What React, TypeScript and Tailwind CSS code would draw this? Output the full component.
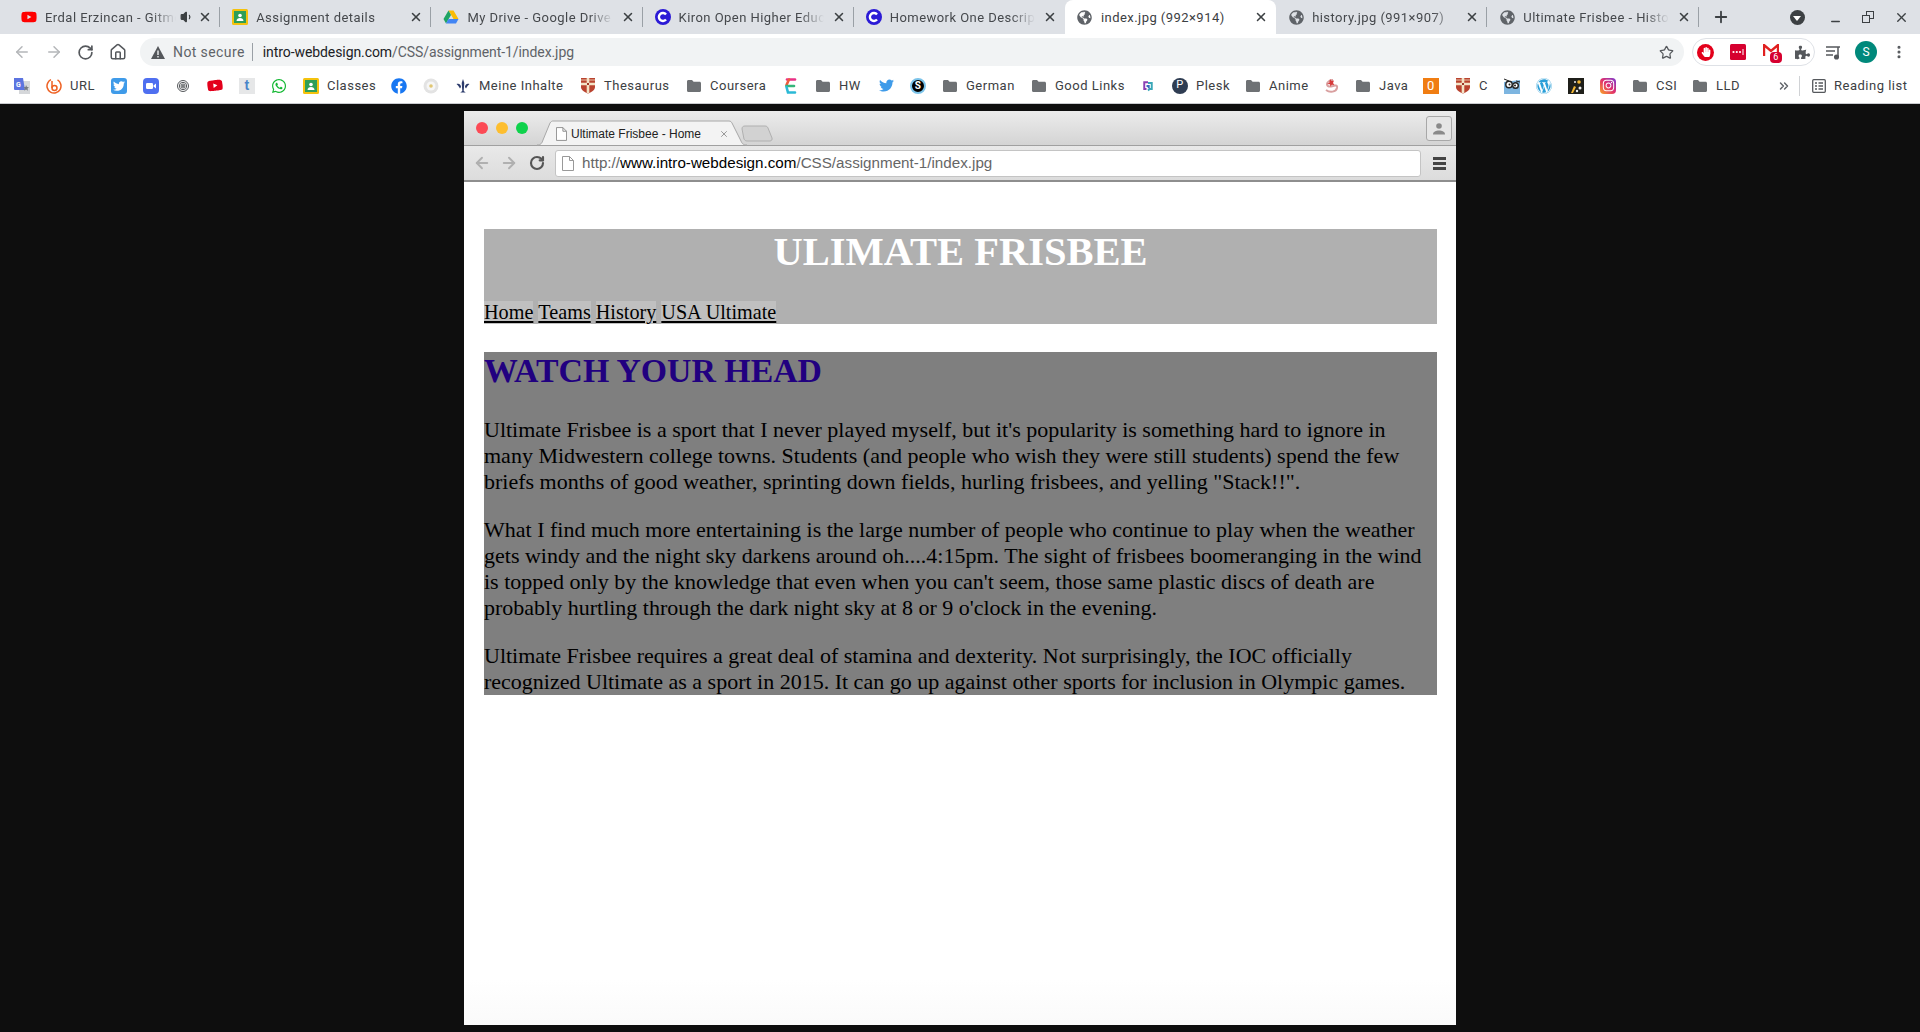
import type { ReactNode } from 'react'
import { ArrowLeft, ArrowRight, Home, RotateCw, Star, X, Plus, Minus, MoreVertical, ChevronsRight, Volume1 } from 'lucide-react'
import { FaFacebook, FaGlobeAmericas, FaHandPaper, FaInstagram, FaPuzzlePiece, FaTwitter, FaWhatsapp, FaWordpress, FaYoutube } from 'react-icons/fa'

const Folder = () => (
  <svg width="16" height="16" viewBox="0 0 16 16" className="text-[#6e7174]">
    <path d="M1 3.5C1 2.7 1.6 2 2.4 2H6l1.6 1.8h6c.8 0 1.4.7 1.4 1.5v7.2c0 .8-.6 1.5-1.4 1.5H2.4C1.6 14 1 13.300 1 12.500z" fill="currentColor" />
  </svg>
)

const Classroom = () => (
  <svg width="16" height="16" viewBox="0 0 16 16">
    <rect width="16" height="16" rx="1.500" fill="#f4c20d" />
    <rect x="2" y="2" width="12" height="12" fill="#2f9e58" />
    <circle cx="8" cy="6.500" r="1.800" fill="#fff" />
    <path d="M4.500 12c0-2 1.600-3 3.500-3s3.500 1 3.500 3z" fill="#fff" />
  </svg>
)

const Drive = () => (
  <svg width="16" height="16" viewBox="0 0 16 16">
    <path d="M5.500 1.500h5L15.500 10h-5z" fill="#fbbc04" />
    <path d="M5.500 1.500L.5 10 3 14.500 8 6z" fill="#1fa463" />
    <path d="M3 14.500h10l2.500-4.500h-10z" fill="#4285f4" />
  </svg>
)

const Kiron = () => (
  <svg width="16" height="16" viewBox="0 0 16 16">
    <circle cx="8" cy="8" r="8" fill="#2b1ad6" />
    <path d="M11 5.500A4 4 0 1 0 11 10.500" fill="none" stroke="#fff" strokeWidth="2.400" />
  </svg>
)

const Translate = () => (
  <svg width="16" height="16" viewBox="0 0 16 16">
    <rect x="5" y="3" width="11" height="13" fill="#d5d7da" />
    <path d="M0 0h9l2 12H5l-1 0H1a1 1 0 0 1-1-1z" fill="#5c74e0" />
    <path d="M12 7l1 2 2 .2-1.500 1.400.5 2.100-2-1.100-1.700 1.100.4-2.100L9.500 9.200l2-.2z" fill="#757a80" />
    <text x="2" y="8.500" fontSize="7" fontWeight="700" fill="#fff" fontFamily="Roboto, sans-serif">G</text>
  </svg>
)

const Bitly = () => (
  <svg width="16" height="16" viewBox="0 0 16 16" fill="none" stroke="#ee6123" strokeWidth="1.500">
    <circle cx="8" cy="8" r="7" strokeDasharray="37 7" transform="rotate(-60 8 8)" />
    <circle cx="8.500" cy="10" r="2.500" />
    <path d="M6 3v7" />
  </svg>
)

const Bird = () => (
  <span className="flex h-4 w-4 items-center justify-center rounded-[3px] bg-[#3f9be9] text-white">
    <FaTwitter size={12} />
  </span>
)

const Zoom = () => (
  <svg width="16" height="16" viewBox="0 0 16 16">
    <rect width="16" height="16" rx="4" fill="#4f6ff0" />
    <rect x="3" y="5" width="7" height="6" rx="1.200" fill="#fff" />
    <path d="M10.500 7.500L13 5.500v5l-2.500-2z" fill="#fff" />
  </svg>
)

const Fingerprint = () => (
  <svg width="16" height="16" viewBox="0 0 16 16" fill="none" stroke="#55585b" strokeWidth="1">
    <circle cx="8" cy="8" r="5.500" />
    <circle cx="8" cy="8" r="3.700" />
    <circle cx="8" cy="8" r="2" />
    <circle cx="8" cy="8" r=".6" fill="#55585b" />
  </svg>
)

const Tumblr = () => (
  <span className="flex h-4 w-4 items-center justify-center bg-[#e6e7e8] text-[14px] font-bold text-[#4a85c9] [font-family:'Liberation_Sans',sans-serif]">t</span>
)

const Flower = () => (
  <svg width="16" height="16" viewBox="0 0 16 16">
    <circle cx="8" cy="8" r="7.500" fill="#e3e3e3" />
    <circle cx="8" cy="8" r="4.500" fill="#f6f6f6" />
    <circle cx="8" cy="8" r="1.800" fill="#e0c673" />
  </svg>
)

const Fleur = () => (
  <svg width="16" height="16" viewBox="0 0 16 16" fill="#2b3a6b">
    <path d="M8 1l1.300 4-.6 8 2 1.500H5.300l2-1.500-.6-8z" />
    <path d="M1.500 6c2.500-1 4.500.5 4.500 3L5 10.500C4 8.500 3 7.500 1.500 6zM14.500 6c-2.500-1-4.500.5-4.500 3l1 1.500c1-2 2-3 3.500-4.500z" />
  </svg>
)

const Crest = () => (
  <svg width="16" height="17" viewBox="0 0 16 17">
    <path d="M1 1h14v9c0 3-3 5-7 6.500C4 15 1 13 1 10z" fill="#b9432f" />
    <path d="M1 7h14M8 1v15" stroke="#f3e3c6" strokeWidth="2.600" />
    <rect x="7" y="6" width="2" height="2" fill="#9c3526" />
    <path d="M1 3h14" stroke="#f3e3c6" strokeWidth=".8" />
  </svg>
)

const Eicon = () => (
  <svg width="16" height="18" viewBox="0 0 16 18" fill="none" strokeWidth="2.600" strokeLinecap="round">
    <path d="M4 2.500h8" stroke="#ea2f86" />
    <path d="M6 2.500L3.500 8" stroke="#ef5a3c" />
    <path d="M3.500 9h7.500" stroke="#35b57a" />
    <path d="M3.500 10l1.500 5.500h7" stroke="#2bb9d6" />
  </svg>
)

const Skooli = () => (
  <span className="flex h-4 w-4 items-center justify-center rounded-full border-2 border-[#7cc4ea] bg-black text-[10px] font-bold text-white">S</span>
)

const Fg = () => (
  <svg width="12" height="12" viewBox="0 0 16 16" fill="none" strokeWidth="2.600">
    <path d="M8 3H3v9h3" stroke="#8a3fb3" />
    <path d="M8 4h5v8h-3l-2 2" stroke="#3aa7b8" />
    <path d="M6 8h3v3" stroke="#3a6cc0" />
  </svg>
)

const Plesk = () => (
  <span className="flex h-4 w-4 items-center justify-center rounded-full bg-[#2f3d52] text-[11px] text-white">P</span>
)

const Anime = () => (
  <svg width="16" height="18" viewBox="0 0 16 18" fill="none">
    <path d="M3 13c4 3 10 2 11-2 .6-3-2-3-4-2-3 1-6 1-6-2 0-2 3-4 6-4" stroke="#d9a0a0" strokeWidth="2" />
    <path d="M7 2l1.500 2 2.500-.5-1 2.500 1.500 2-2.700-.3-1.300 2-.5-2.500L4 7l2.300-1.200z" fill="#d63a3a" />
  </svg>
)

const Zero = () => (
  <span className="flex h-4 w-4 items-center justify-center bg-[#f07d12] text-[13px] leading-none text-white">0</span>
)

const Owl = () => (
  <svg width="16" height="16" viewBox="0 0 16 16">
    <path d="M0 4l16-2v14H0z" fill="#7db5e0" />
    <circle cx="5" cy="6.500" r="3.200" fill="#fff" stroke="#222" strokeWidth="1.400" />
    <circle cx="11.500" cy="7.500" r="2.800" fill="#fff" stroke="#222" strokeWidth="1.400" />
    <circle cx="5.500" cy="6.500" r="1" fill="#222" />
    <circle cx="11" cy="7.500" r="1" fill="#222" />
    <path d="M0 1l5 2M16 4l-4-1" stroke="#222" />
  </svg>
)

const Stars = () => (
  <svg width="16" height="16" viewBox="0 0 16 16">
    <rect width="16" height="16" fill="#1f1f1a" />
    <path d="M3 15l3-7 2 1-3 6z" fill="#f2b632" />
    <circle cx="11" cy="4" r="1.800" fill="#f2b632" />
    <circle cx="12" cy="10" r="1.500" fill="#eee" />
    <circle cx="7" cy="4" r="1" fill="#eee" />
    <circle cx="9" cy="13" r="1.200" fill="#eee" />
  </svg>
)

const Insta = () => (
  <span className="flex h-4 w-4 items-center justify-center rounded-[4px] bg-[linear-gradient(45deg,#f9a825,#e1306c_50%,#7a3bd1)] text-white">
    <FaInstagram size={13} />
  </span>
)

type Mark = { icon: ReactNode; label?: string; w?: number }

const bookmarks: Mark[] = [
  { icon: <Translate /> },
  { icon: <Bitly />, label: 'URL', w: 25 },
  { icon: <Bird /> },
  { icon: <Zoom /> },
  { icon: <Fingerprint /> },
  { icon: <FaYoutube size={17} className="-rotate-6 text-[#e3001b]" /> },
  { icon: <Tumblr /> },
  { icon: <FaWhatsapp size={16} className="text-[#12b832]" /> },
  { icon: <Classroom />, label: 'Classes', w: 48 },
  { icon: <FaFacebook size={16} className="text-[#1877f2]" /> },
  { icon: <Flower /> },
  { icon: <Fleur />, label: 'Meine Inhalte', w: 85 },
  { icon: <Crest />, label: 'Thesaurus', w: 66 },
  { icon: <Folder />, label: 'Coursera', w: 57 },
  { icon: <Eicon /> },
  { icon: <Folder />, label: 'HW', w: 23 },
  { icon: <FaTwitter size={15} className="text-[#3f9be9]" /> },
  { icon: <Skooli /> },
  { icon: <Folder />, label: 'German', w: 49 },
  { icon: <Folder />, label: 'Good Links', w: 69 },
  { icon: <Fg /> },
  { icon: <Plesk />, label: 'Plesk', w: 33 },
  { icon: <Folder />, label: 'Anime', w: 38 },
  { icon: <Anime /> },
  { icon: <Folder />, label: 'Java', w: 28 },
  { icon: <Zero /> },
  { icon: <Crest />, label: 'C', w: 9 },
  { icon: <Owl /> },
  { icon: <FaWordpress size={16} className="text-[#2a9fd8]" /> },
  { icon: <Stars /> },
  { icon: <Insta /> },
  { icon: <Folder />, label: 'CSI', w: 20 },
  { icon: <Folder />, label: 'LLD', w: 24 },
]

const Globe = () => <FaGlobeAmericas size={15} className="text-[#5f6368]" />

const tabs: { icon: ReactNode; title: string; audio?: boolean; active?: boolean; noSep?: boolean }[] = [
  { icon: <FaYoutube size={16} className="text-[#f00]" />, title: 'Erdal Erzincan - Gitmem', audio: true },
  { icon: <Classroom />, title: 'Assignment details' },
  { icon: <Drive />, title: 'My Drive - Google Drive' },
  { icon: <Kiron />, title: 'Kiron Open Higher Education' },
  { icon: <Kiron />, title: 'Homework One Description', noSep: true },
  { icon: <Globe />, title: 'index.jpg (992×914)', active: true, noSep: true },
  { icon: <Globe />, title: 'history.jpg (991×907)' },
  { icon: <Globe />, title: 'Ultimate Frisbee - History' },
]

function Tab({ t }: { t: (typeof tabs)[number] }) {
  return (
    <div className={`relative flex h-[34px] w-[211.2px] shrink-0 items-center pl-3 pr-2 ${t.active ? 'rounded-t-lg bg-white' : ''}`}>
      <span className="flex w-4 shrink-0 justify-center">{t.icon}</span>
      <span className={`ml-2 min-w-0 flex-1 overflow-hidden whitespace-nowrap pt-[1px] text-[13px] tracking-[.45px] ${t.active ? 'text-[#3c4043]' : 'text-[#45484c] [mask-image:linear-gradient(to_left,transparent,black_24px)]'}`}>
        {t.title}
      </span>
      {t.audio && <Volume1 size={14} fill="#3c4043" className="ml-1 shrink-0 text-[#3c4043]" />}
      <X size={14} strokeWidth={2.600} className={`shrink-0 text-[#3c4043] ${t.audio ? 'ml-[4px]' : 'ml-2'}`} />
      {!t.noSep && <span className="absolute right-0 top-[7px] h-5 w-px bg-[#9aa0a6]" />}
    </div>
  )
}

function ChromeBar() {
  return (
    <div className="[font-family:Roboto,'Liberation_Sans',sans-serif]">
      <div className="flex h-[34px] items-center bg-[#dee1e6] pl-[9px]">
        {tabs.map(t => <Tab key={t.title} t={t} />)}
        <Plus size={18} strokeWidth={2.400} className="ml-[13px] text-[#3c4043]" />
        <span className="ml-[60px] flex h-[15px] w-[15px] items-center justify-center rounded-full bg-[#3c4043]">
          <span className="mt-[3px] h-0 w-0 border-x-[4px] border-t-[5px] border-x-transparent border-t-white" />
        </span>
        <Minus size={13} strokeWidth={2.500} className="ml-[24px] mt-2 text-[#3c4043]" />
        <span className="relative ml-[20px] h-3 w-3">
          <span className="absolute right-0 top-0 h-[8px] w-[8px] border-[1.500px] border-[#3c4043]" />
          <span className="absolute bottom-0 left-0 h-[8px] w-[8px] border-[1.500px] border-[#3c4043] bg-[#dee1e6]" />
        </span>
        <X size={15} strokeWidth={2.200} className="ml-[20px] text-[#3c4043]" />
      </div>

      <div className="flex h-[34px] items-center bg-white pl-[13px] pt-[2px]">
        <ArrowLeft size={18} className="text-[#b4b6b9]" />
        <ArrowRight size={18} className="ml-[14px] text-[#b4b6b9]" />
        <RotateCw size={17} strokeWidth={2.400} className="ml-[14px] text-[#55585c]" />
        <Home size={18} strokeWidth={2} className="ml-[15px] text-[#55585c]" />
        <div className="ml-[13px] flex h-[28px] w-[1544px] items-center rounded-full bg-[#f1f3f4] pl-[11px] pr-[10px]">
          <svg width="14" height="13" viewBox="0 0 14 13" className="shrink-0"><path d="M7 0l7 13H0z" fill="#54575b" /><rect x="6.300" y="4.500" width="1.400" height="4.500" fill="#f1f3f4" /><rect x="6.300" y="10" width="1.400" height="1.500" fill="#f1f3f4" /></svg>
          <span className="ml-2 text-[14px] tracking-[.4px] text-[#5f6368]">Not secure</span>
          <span className="ml-[7px] h-[18px] w-px bg-[#9aa0a6]" />
          <span className="ml-[10px] text-[14px] tracking-[-.08px] text-[#5f6368]"><span className="text-[#202124]">intro-webdesign.com</span>/CSS/assignment-1/index.jpg</span>
          <Star size={15} strokeWidth={2} className="ml-auto text-[#55585c]" />
        </div>
        <div className="ml-2 flex h-[28px] w-[123px] items-center justify-between rounded-full border border-[#dee1e6] px-[4px]">
          <span className="flex h-[17px] w-[17px] items-center justify-center rounded-full bg-[#e3001b] text-white">
            <FaHandPaper size={10} />
          </span>
          <svg width="16" height="16" viewBox="0 0 16 16">
            <rect width="16" height="16" rx="1.500" fill="#d6002f" />
            <circle cx="3.500" cy="8" r="1.100" fill="#fff" />
            <circle cx="6.800" cy="8" r="1.100" fill="#fff" />
            <circle cx="10" cy="8" r="1.100" fill="#fff" />
            <rect x="12.500" y="5" width="1" height="6" fill="#fff" />
          </svg>
          <span className="relative h-4 w-4">
            <svg width="16" height="13" viewBox="0 0 16 13"><path d="M1 12V1l7 6 7-6v11" fill="none" stroke="#e02020" strokeWidth="2.400" /></svg>
            <span className="absolute -bottom-[3px] -right-[3px] flex h-[11px] w-3 items-center justify-center rounded-sm bg-[#d6002f] text-[9px] leading-none text-white">6</span>
          </span>
          <FaPuzzlePiece size={15} className="text-[#55585c]" />
        </div>
        <svg width="16" height="15" viewBox="0 0 16 15" className="ml-[10px]" fill="none" stroke="#55585c" strokeWidth="1.500"><path d="M1 2h14M1 6h9M1 10h7M13 2v10" /><circle cx="11.500" cy="12" r="1.800" fill="#55585c" /></svg>
        <span className="ml-[14px] flex h-[22px] w-[22px] items-center justify-center rounded-full bg-[#00897b] text-[12px] text-white">S</span>
        <MoreVertical size={16} strokeWidth={2.600} className="ml-[14px] text-[#55585c]" />
      </div>

      <div className="flex h-[36px] items-center border-b border-[#c9cbcf] bg-white pl-[6px] text-[13px] tracking-[.5px] text-[#3c4043]">
        {bookmarks.map((b, i) => (
          <div key={i} className="flex h-7 shrink-0 items-center gap-2 px-2">
            <span className="flex h-4 w-4 items-center justify-center">{b.icon}</span>
            {b.label && <span className="whitespace-nowrap" style={{ width: b.w }}>{b.label}</span>}
          </div>
        ))}
        <ChevronsRight size={14} strokeWidth={2.500} className="ml-[29px] text-[#5f6368]" />
        <span className="ml-2 h-5 w-px bg-[#d0d2d5]" />
        <svg width="14" height="14" viewBox="0 0 14 14" className="ml-3" fill="none" stroke="#55585c" strokeWidth="1.300"><rect x=".7" y=".7" width="12.600" height="12.600" rx="1" /><path d="M3 4h2M3 7h2M3 10h2M6.500 4H11M6.500 7H11M6.500 10H11" /></svg>
        <span className="ml-2 whitespace-nowrap">Reading list</span>
      </div>
    </div>
  )
}

function Shot() {
  return (
    <div className="mx-auto mt-[7px] h-[914px] w-[992px] bg-[linear-gradient(to_bottom,#fff_95%,#fafafa)]">
      <div className="relative flex h-[35px] items-center border-b border-[#a0a0a0] bg-[linear-gradient(to_bottom,#ececec,#d4d4d4)] pl-3">
        <span className="h-3 w-3 rounded-full bg-[#fc4a55]" />
        <span className="ml-2 h-3 w-3 rounded-full bg-[#fdbe2f]" />
        <span className="ml-2 h-3 w-3 rounded-full bg-[#0fd24c]" />
        <svg width="240" height="26" viewBox="0 0 240 26" className="absolute bottom-[-1px] left-[72px]">
          <path d="M1 25c4 0 5-2 6-5L14 3c1-1.500 2-2 3-2h176c1.500 0 2.500 1 3 2l9 18c1 2.500 2 4 6 4" fill="#f3f3f3" stroke="#a8a8a8" />
          <path d="M206 9c0-2 1-3 3-3h20c1.500 0 2.500.7 3 2l4 10c.5 1.500-.5 3-2 3h-23c-1.500 0-2.500-1-3-2z" fill="#d2d2d2" stroke="#b0b0b0" />
        </svg>
        <svg width="11" height="14" viewBox="0 0 12 15" className="absolute left-[92px] top-[16px]" fill="#fff" stroke="#8a8a8a"><path d="M.5.500h7l4 4v10H.5zM7.500.500v4h4" /></svg>
        <span className="absolute left-[107px] top-[16px] whitespace-nowrap text-[12px] leading-[15px] text-[#222] [font-family:'Liberation_Sans',sans-serif]">Ultimate Frisbee - Home</span>
        <X size={10} strokeWidth={2} className="absolute left-[255px] top-[18px] text-[#888]" />
        <span className="absolute right-1 top-[5px] flex h-[25px] w-[26px] items-center justify-center rounded-[3px] border border-[#a8a8a8] bg-[#e6e6e6]">
          <svg width="14" height="14" viewBox="0 0 14 14" fill="#8a8a8a"><circle cx="7" cy="4" r="2.800" /><path d="M1 12.500c0-3 3-4 6-4s6 1 6 4z" /></svg>
        </span>
      </div>
      <div className="flex h-[36px] items-center border-b-2 border-[#8e8e8e] bg-[linear-gradient(to_bottom,#e9e9e9,#dcdcdc)] pl-[9px]">
        <ArrowLeft size={18} strokeWidth={2.500} className="text-[#b0b0b0]" />
        <ArrowRight size={18} strokeWidth={2.500} className="ml-[9px] text-[#b0b0b0]" />
        <RotateCw size={16} strokeWidth={3.200} className="ml-[11px] text-[#555]" />
        <div className="ml-[10px] flex h-[27px] w-[866px] items-center rounded-[3px] border border-[#c4c4c4] bg-white pl-[6px] text-[15.200px] text-[#666] [font-family:'Liberation_Sans',sans-serif]">
          <svg width="12" height="15" viewBox="0 0 12 15" fill="#fff" stroke="#999"><path d="M.5.500h7l4 4v10H.5zM7.500.500v4h4" /></svg>
          <span className="ml-[8px] whitespace-nowrap pt-[1px]">http://<span className="text-black">www.intro-webdesign.com</span>/CSS/assignment-1/index.jpg</span>
        </div>
        <span className="ml-[12px] flex w-[13px] flex-col gap-[2px]">
          <span className="h-[3px] bg-[#444]" />
          <span className="h-[3px] bg-[#444]" />
          <span className="h-[3px] bg-[#444]" />
        </span>
      </div>

      <div className="ml-5 mr-[19px] mt-[47px] text-black [font-family:'Liberation_Serif',serif]">
        <header className="flex h-[95px] flex-col bg-[#b0b0b0]">
          <h1 className="text-center text-[40.500px] font-bold leading-[46px] text-white">ULIMATE FRISBEE</h1>
          <nav className="mt-auto flex gap-[5px] text-[20.200px] leading-[23px]">
            <a className="bg-[#c0c0c0] underline decoration-2 underline-offset-2">Home</a>
            <a className="bg-[#c0c0c0] underline decoration-2 underline-offset-2">Teams</a>
            <a className="bg-[#c0c0c0] underline decoration-2 underline-offset-2">History</a>
            <a className="bg-[#c0c0c0] underline decoration-2 underline-offset-2">USA Ultimate</a>
          </nav>
        </header>
        <main className="mt-7 h-[343px] bg-[#7f7f7f]">
          <h2 className="text-[33.800px] font-bold leading-[38px] text-[#210080]">WATCH YOUR HEAD</h2>
          <p className="mt-[27px] text-[22px] leading-[26px]">Ultimate Frisbee is a sport that I never played myself, but it's popularity is something hard to ignore in many Midwestern college towns. Students (and people who wish they were still students) spend the few briefs months of good weather, sprinting down fields, hurling frisbees, and yelling "Stack!!".</p>
          <p className="mt-[22px] text-[22px] leading-[26px]">What I find much more entertaining is the large number of people who continue to play when the weather gets windy and the night sky darkens around oh....4:15pm. The sight of frisbees boomeranging in the wind is topped only by the knowledge that even when you can't seem, those same plastic discs of death are probably hurtling through the dark night sky at 8 or 9 o'clock in the evening.</p>
          <p className="mt-[22px] text-[22px] leading-[26px]">Ultimate Frisbee requires a great deal of stamina and dexterity. Not surprisingly, the IOC officially recognized Ultimate as a sport in 2015. It can go up against other sports for inclusion in Olympic games.</p>
        </main>
      </div>
    </div>
  )
}

export default function App() {
  return (
    <div className="h-[1032px] overflow-hidden bg-[#0e0e0e]">
      <ChromeBar />
      <Shot />
    </div>
  )
}
